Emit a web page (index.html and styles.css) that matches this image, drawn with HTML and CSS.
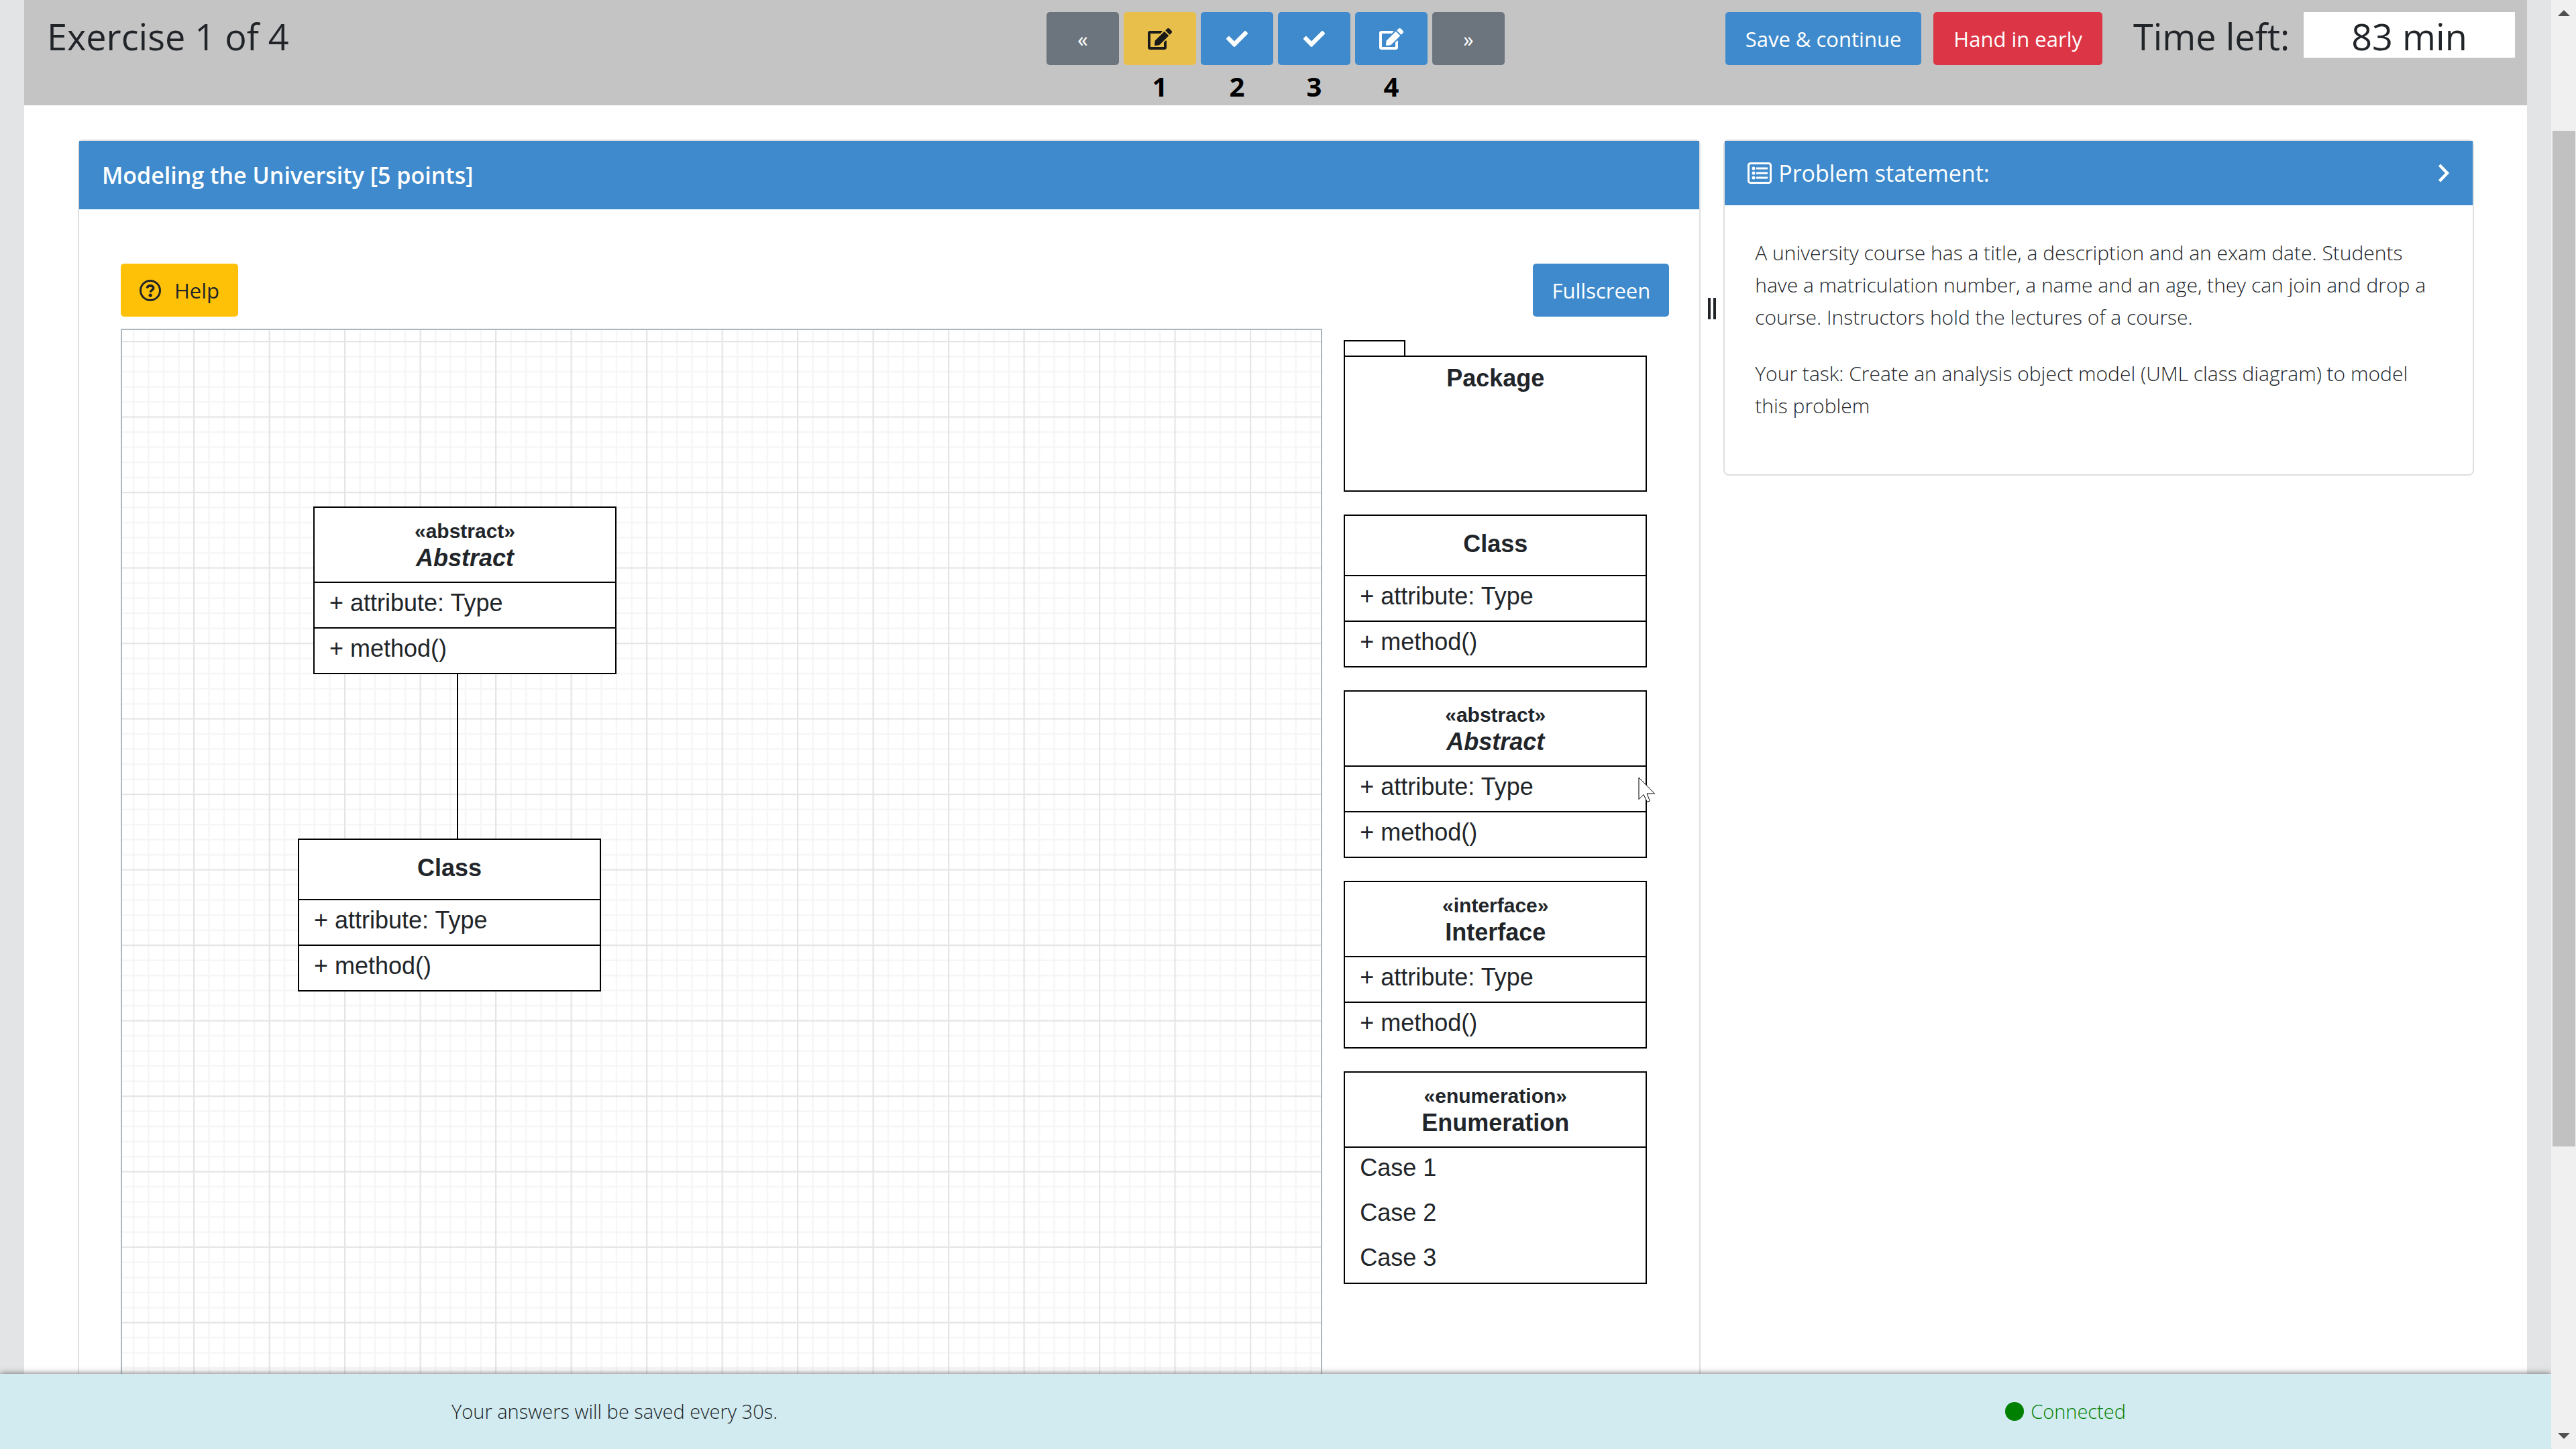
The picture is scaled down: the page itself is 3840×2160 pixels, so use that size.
FILE: index.html
```html
<!DOCTYPE html>
<html lang="en">
<head>
<meta charset="utf-8">
<title>Exercise 1 of 4</title>
<link rel="stylesheet" href="styles.css">
</head>
<body>
<svg class="defs" aria-hidden="true">
  <symbol id="icon-edit" viewBox="0 0 576 512"><path fill="currentColor" d="M402.6 83.2l90.2 90.2c3.8 3.8 3.8 10 0 13.8L274.400 405.600l-92.800 10.300c-12.400 1.400-22.900-9.100-21.500-21.500l10.300-92.800L388.800 83.200c3.800-3.800 10-3.800 13.800 0zm162-22.900l-48.800-48.800c-15.200-15.200-39.900-15.200-55.200 0l-35.400 35.400c-3.800 3.800-3.800 10 0 13.800l90.200 90.200c3.800 3.800 10 3.800 13.800 0l35.400-35.400c15.200-15.300 15.200-40 0-55.200zM384 346.200V448H64V128h229.800c3.200 0 6.200-1.300 8.500-3.500l40-40c7.600-7.600 2.200-20.500-8.500-20.500H48C21.500 64 0 85.500 0 112v352c0 26.500 21.500 48 48 48h352c26.500 0 48-21.500 48-48V306.200c0-10.700-12.900-16-20.500-8.500l-40 40c-2.200 2.300-3.500 5.300-3.500 8.500z"/></symbol>
  <symbol id="icon-check" viewBox="0 0 512 512"><path fill="currentColor" d="M173.898 439.404l-166.400-166.400c-9.997-9.997-9.997-26.206 0-36.204l36.203-36.204c9.997-9.998 26.207-9.998 36.204 0L192 312.690 432.095 72.596c9.997-9.997 26.207-9.997 36.204 0l36.203 36.204c9.997 9.997 9.997 26.206 0 36.204l-294.400 294.401c-9.998 9.997-26.207 9.997-36.204-.001z"/></symbol>
</svg>
<div class="window">
  <div class="app">
    <div class="page">
      <header class="exam-bar">
        <h1 class="exam-title">Exercise 1 of 4</h1>
        <nav class="exam-nav" aria-label="Exercises">
          <div class="nav-item"><button class="btn btn-secondary nav-btn" aria-label="Previous">«</button></div>
          <div class="nav-item"><button class="btn btn-active nav-btn" aria-label="Exercise 1"><svg class="icon-edit"><use href="#icon-edit"/></svg></button><b>1</b></div>
          <div class="nav-item"><button class="btn btn-primary nav-btn" aria-label="Exercise 2"><svg class="icon-check"><use href="#icon-check"/></svg></button><b>2</b></div>
          <div class="nav-item"><button class="btn btn-primary nav-btn" aria-label="Exercise 3"><svg class="icon-check"><use href="#icon-check"/></svg></button><b>3</b></div>
          <div class="nav-item"><button class="btn btn-primary nav-btn" aria-label="Exercise 4"><svg class="icon-edit"><use href="#icon-edit"/></svg></button><b>4</b></div>
          <div class="nav-item"><button class="btn btn-secondary nav-btn" aria-label="Next">»</button></div>
        </nav>
        <div class="exam-actions">
          <button class="btn btn-primary">Save &amp; continue</button>
          <button class="btn btn-danger">Hand in early</button>
          <div class="timer"><span class="timer-label">Time left:</span><span class="timer-value">83 min</span></div>
        </div>
      </header>
      <main class="workspace">
        <section class="card editor">
          <h2 class="card-header editor-header">Modeling the University [5 points]</h2>
          <div class="editor-body">
            <div class="toolbar">
              <button class="btn btn-warning"><svg class="icon-help" viewBox="0 0 32 32"><circle cx="16" cy="16" r="14.500" fill="none" stroke="currentColor" stroke-width="3"/><path d="M11.200 12.600c.5-2.400 2.200-3.700 4.800-3.700 2.800 0 4.800 1.400 4.800 3.600 0 3.200-4.600 3-4.600 6.300" fill="none" stroke="currentColor" stroke-width="3.600"/><circle cx="16.200" cy="23.200" r="2.600" fill="currentColor"/></svg>Help</button>
              <button class="btn btn-primary">Fullscreen</button>
            </div>
            <div class="modeler">
              <div class="canvas">
                <svg class="grid-lines" aria-hidden="true">
                  <defs><pattern id="grid" width="50" height="50" patternUnits="userSpaceOnUse" patternTransform="translate(106 16) scale(2.25)">
                    <path d="M10.500 0V50M20.500 0V50M30.500 0V50M40.500 0V50M0 10.500H50M0 20.500H50M0 30.500H50M0 40.500H50" stroke="#f5f5f5"/>
                    <path d="M.5 0V50M0 .5H50" stroke="#e5e5e5"/>
                  </pattern></defs>
                  <rect width="100%" height="100%" fill="url(#grid)"/>
                </svg>
                <div class="relation"></div>
                <div class="node node-abstract">
                  <div class="uml">
                    <div class="uml-head"><span class="stereotype">«abstract»</span><i>Abstract</i></div>
                    <div class="uml-row">+ attribute: Type</div>
                    <div class="uml-row">+ method()</div>
                  </div>
                </div>
                <div class="node node-class">
                  <div class="uml">
                    <div class="uml-head uml-head-plain">Class</div>
                    <div class="uml-row">+ attribute: Type</div>
                    <div class="uml-row">+ method()</div>
                  </div>
                </div>
              </div>
              <div class="palette">
                <div class="package">
                  <div class="package-tab"></div>
                  <div class="package-body">Package</div>
                </div>
                <div class="uml">
                  <div class="uml-head uml-head-plain">Class</div>
                  <div class="uml-row">+ attribute: Type</div>
                  <div class="uml-row">+ method()</div>
                </div>
                <div class="uml">
                  <div class="uml-head"><span class="stereotype">«abstract»</span><i>Abstract</i></div>
                  <div class="uml-row">+ attribute: Type</div>
                  <div class="uml-row">+ method()</div>
                  <svg class="cursor" viewBox="0 0 26 40" aria-hidden="true"><path d="M1 1V33.500L8 26.500L13.500 37.500L17.500 36L13 25H24.500z" fill="#fff" stroke="#000"/></svg>
                </div>
                <div class="uml">
                  <div class="uml-head"><span class="stereotype">«interface»</span><span>Interface</span></div>
                  <div class="uml-row">+ attribute: Type</div>
                  <div class="uml-row">+ method()</div>
                </div>
                <div class="uml">
                  <div class="uml-head"><span class="stereotype">«enumeration»</span><span>Enumeration</span></div>
                  <div class="uml-cases"><div>Case 1</div><div>Case 2</div><div>Case 3</div></div>
                </div>
              </div>
            </div>
          </div>
        </section>
        <div class="resizer" role="separator"><span></span><span></span></div>
        <section class="card problem">
          <h2 class="card-header problem-header">
            <svg class="icon-list" viewBox="0 0 36 32"><rect x="1.500" y="1.500" width="33" height="29" rx="3" fill="none" stroke="currentColor" stroke-width="3"/><g fill="currentColor"><circle cx="9" cy="9" r="2.500"/><circle cx="9" cy="16" r="2.500"/><circle cx="9" cy="23" r="2.500"/><path d="M13 7.500h17v3H13zM13 14.500h17v3H13zM13 21.500h17v3H13z"/></g></svg>
            <span>Problem statement:</span>
            <svg class="icon-chevron" viewBox="0 0 18 28"><path d="M2.500 2l11.500 12L2.500 26" fill="none" stroke="currentColor" stroke-width="4.500"/></svg>
          </h2>
          <div class="problem-body">
            <p>A university course has a title, a description and an exam date. Students have a matriculation number, a name and an age, they can join and drop a course. Instructors hold the lectures of a course.</p>
            <p>Your task: Create an analysis object model (UML class diagram) to model this problem</p>
          </div>
        </section>
      </main>
    </div>
    <footer class="status-bar">
      <span>Your answers will be saved every 30s.</span>
      <span class="connection"><span class="dot"></span>Connected</span>
    </footer>
  </div>
  <div class="scrollbar" aria-hidden="true">
    <svg class="arrow" viewBox="0 0 18 9"><path d="M0 9L9 0l9 9z" fill="#505050"/></svg>
    <div class="track"><div class="thumb"></div></div>
    <svg class="arrow" viewBox="0 0 18 9"><path d="M0 0h18L9 9z" fill="#505050"/></svg>
  </div>
</div>
</body>
</html>
```
FILE: styles.css
```css
* { box-sizing: border-box; }

body {
  margin: 0;
  color: #212529;
  font: 300 30px/48px "Open Sans", "Noto Sans", sans-serif;
}

h1, h2, p { margin: 0; }

.defs { position: absolute; width: 0; height: 0; }

.window { display: flex; height: 100vh; overflow: hidden; }
.app { flex: 1; min-width: 0; display: flex; flex-direction: column; background: #e3e4e6; }

.page {
  flex: 1;
  min-height: 0;
  overflow: hidden;
  margin: 0 36px;
  display: flex;
  flex-direction: column;
  background: #fff;
}

/* top bar */
.exam-bar {
  display: grid;
  grid-template-columns: 1fr auto 1fr;
  align-items: start;
  padding: 18px 18px 0;
  height: 157px;
  flex: none;
  background: #c4c4c4;
}
.exam-title { padding-left: 16px; font-size: 54px; line-height: 72px; font-weight: 500; }
.exam-nav { display: flex; gap: 7px; }
.nav-item { display: flex; flex-direction: column; align-items: center; gap: 8px; }
.nav-item b { color: #000; font-size: 40px; font-weight: 700; line-height: 48px; }
.exam-actions { display: flex; justify-content: flex-end; gap: 18px; }
.timer { display: flex; align-items: flex-start; gap: 14px; margin-left: 28px; font-size: 54px; line-height: 72px; font-weight: 500; }
.timer-label { min-width: 240px; }
.timer-value { width: 315px; height: 68px; text-align: center; background: #fff; }

.btn {
  display: flex;
  align-items: center;
  justify-content: center;
  height: 79px;
  padding: 0 28px;
  border: 0;
  border-radius: 5px;
  color: #fff;
  font: 400 31px/48px "Open Sans", "Noto Sans", sans-serif;
  white-space: nowrap;
}
.exam-actions .btn { padding: 0 30px; }
.nav-btn { width: 108px; }
.btn-primary { background: #3e8acc; }
.btn-secondary { background: #6c757d; }
.btn-active { background: #e8bf4a; color: #1a1a1a; }
.btn-danger { background: #dc3545; }
.btn-warning { background: #ffc107; color: #212529; gap: 20px; }

.icon-edit { width: 36px; height: 32px; }
.icon-check { width: 32px; height: 32px; }
.icon-help { width: 32px; height: 32px; }
.icon-list { width: 36px; height: 32px; margin-right: 10px; }
.icon-chevron { width: 18px; height: 28px; margin-left: auto; }

/* workspace */
.workspace { flex: 1; min-height: 0; display: flex; align-items: flex-start; padding: 51px 79px 0 80px; }
.card { border: 2px solid #dfdfdf; border-radius: 8px; }
.card-header { display: flex; align-items: center; padding: 0 34px; background: #3e8acc; color: #fff; font-size: 34px; line-height: 48px; }
.editor { flex: 13 1 0; min-width: 0; align-self: stretch; display: flex; flex-direction: column; border-bottom: 0; border-radius: 8px 8px 0 0; }
.editor-header { height: 102px; flex: none; font-weight: 600; }
.editor-body { flex: 1; min-height: 0; display: flex; flex-direction: column; padding: 81px 45px 0 62px; }
.toolbar { display: flex; justify-content: space-between; }
.modeler { flex: 1; min-height: 0; display: flex; gap: 32px; margin: 18px 33px 0 0; }

.canvas { position: relative; flex: 1; min-width: 0; border: 2px solid #adb5bd; border-bottom: 0; }
.grid-lines { display: block; width: 100%; height: 100%; }
.relation { position: absolute; left: 499px; top: 500px; width: 2px; height: 260px; background: #000; }
.node { position: absolute; }
.node-abstract { left: 285px; top: 263px; }
.node-class { left: 262px; top: 758px; }

/* class diagram elements */
.palette { flex: none; display: flex; flex-direction: column; gap: 34px; padding-top: 17px; }
.uml, .package { position: relative; width: 452px; font: 400 36px/40px "Liberation Sans", Arial, sans-serif; }
.uml { border: 2px solid #000; background: #fff; }
.uml-head { height: 110px; display: flex; flex-direction: column; align-items: center; justify-content: center; font-weight: 700; }
.uml-head-plain { height: 88px; padding-bottom: 4px; }
.stereotype { font-size: 30px; line-height: 40px; }
.uml-row { height: 68px; padding: 0 22px; border-top: 2px solid #000; line-height: 60px; }
.uml-cases { border-top: 2px solid #000; padding: 0 22px; }
.uml-cases div { height: 67px; line-height: 60px; }
.package-tab { width: 92px; height: 23px; border: 2px solid #000; border-bottom: 0; }
.package-body { height: 203px; padding-top: 12px; border: 2px solid #000; text-align: center; font-weight: 700; }
.cursor { position: absolute; right: -15px; top: 127px; width: 26px; height: 40px; }

.resizer { flex: none; width: 34px; display: flex; justify-content: center; gap: 4px; padding-top: 236px; }
.resizer span { width: 4px; height: 32px; background: #212529; }

.problem { flex: 6 1 0; min-width: 0; }
.problem-header { height: 96px; font-weight: 400; }
.problem-body { padding: 47px 45px 78px; display: flex; flex-direction: column; gap: 36px; }

/* status bar */
.status-bar {
  position: relative;
  flex: none;
  display: flex;
  align-items: center;
  justify-content: space-between;
  height: 112px;
  padding: 0 634px 0 673px;
  background: #d1ebf0;
  box-shadow: 0 0 9px #666;
  font-size: 29px;
}
.connection { display: flex; align-items: center; gap: 10px; color: #008000; }
.dot { width: 28px; height: 28px; border-radius: 50%; background: #008000; }

/* scrollbar */
.scrollbar { position: relative; flex: none; width: 37px; padding: 15px 0; display: flex; flex-direction: column; align-items: center; gap: 14px; background: #f0f0f0; }
.arrow { width: 18px; height: 9px; }
.track { flex: 1; align-self: stretch; display: flex; flex-direction: column; padding: 157px 1px 0 2px; }
.thumb { flex: 11 1 0; background: #c1c1c1; }
.track::after { content: ""; flex: 3 1 0; }
```
